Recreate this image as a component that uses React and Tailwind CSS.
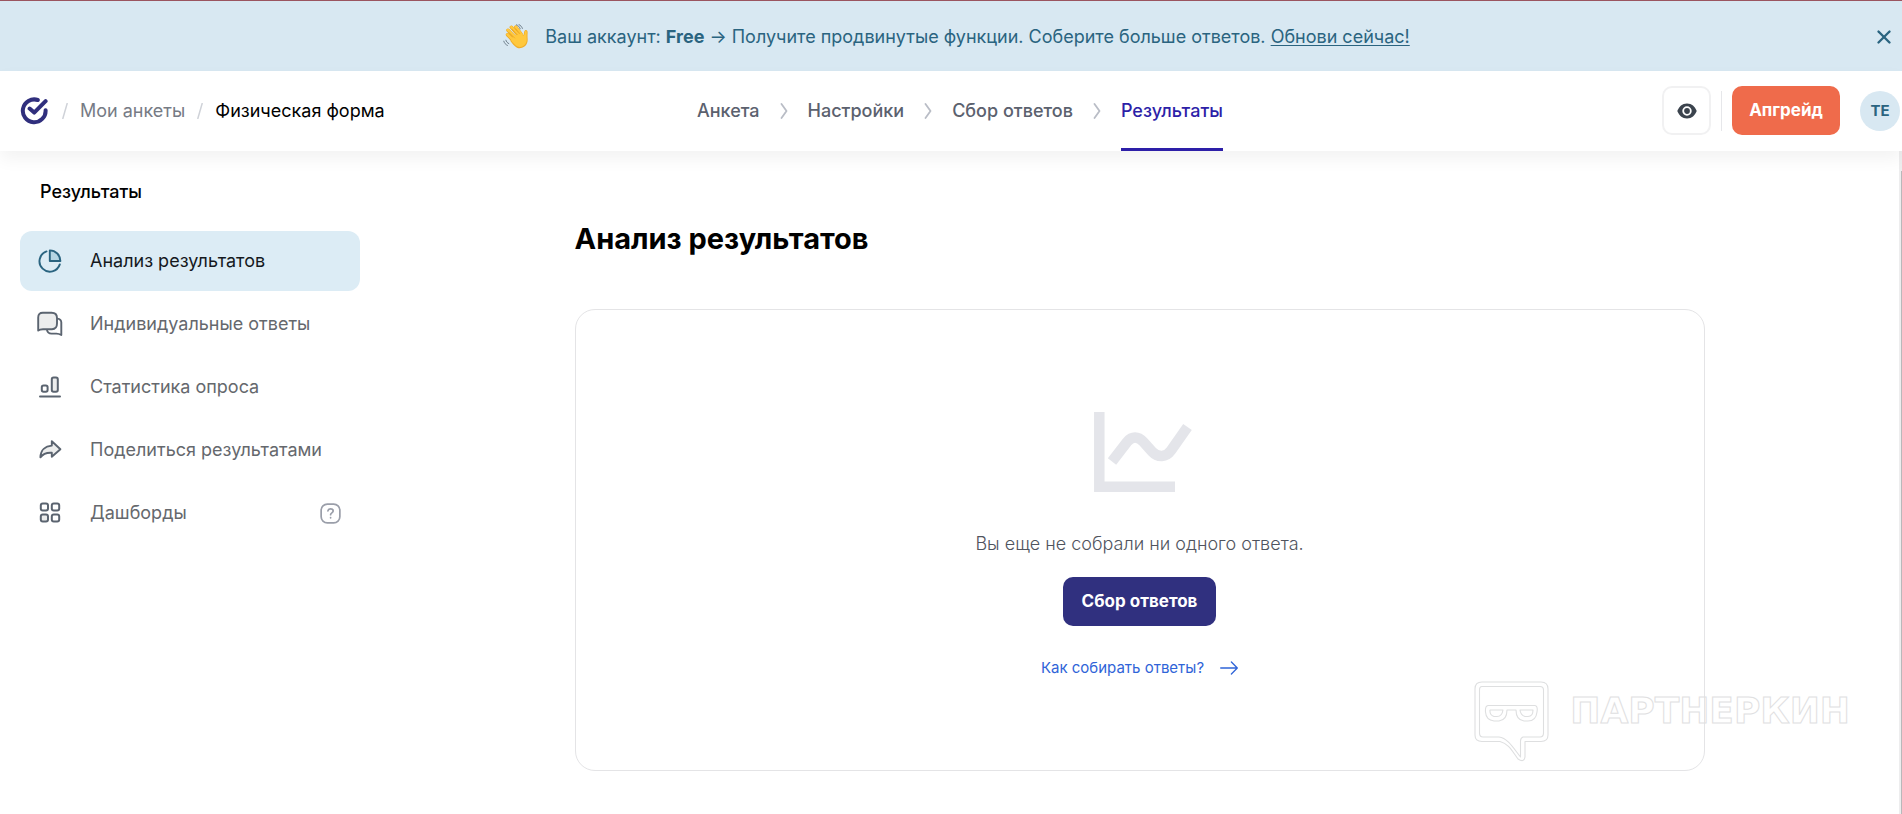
import { X } from 'lucide-react'

const PieIcon = () => (
  <svg width="26" height="26" viewBox="0 0 26 26" fill="none" stroke="#2a6480" strokeWidth="1.9" strokeLinecap="round" strokeLinejoin="round">
    <path d="M9.5 3.4A10.4 10.4 0 1 0 22.8 16.4" />
    <path d="M12.8 2.4A10.6 10.6 0 0 1 23.4 13H12.8Z" fill="#b5d5e3" />
  </svg>
)

const ChatIcon = () => (
  <svg width="26" height="26" viewBox="0 0 26 26" fill="none" stroke="#5b6470" strokeWidth="1.9" strokeLinecap="round" strokeLinejoin="round">
    <path d="M20.4 7.6C22.6 7.8 24.3 9.3 24.3 11.6V24C22.4 22.8 21.4 22.6 19.4 22.6H14.4C11.8 22.6 10.4 21.2 9.9 18.6" />
    <path d="M1.2 19.6V6.4C1.2 3.2 2.9 1.7 5.8 1.7H14.6C18 1.7 20 3.6 20 7V12.6C20 16.2 18.4 18.2 15 18.2H6C4 18.2 2.4 18.5 1.2 19.6Z" fill="#eceded" />
  </svg>
)

const StatsIcon = () => (
  <svg width="26" height="26" viewBox="0 0 26 26" fill="none" stroke="#5b6470" strokeWidth="2" strokeLinecap="round">
    <rect x="4.8" y="11.4" width="5.8" height="6.4" rx="1.8" />
    <rect x="14.8" y="3.6" width="6" height="14.2" rx="1.8" fill="#eceded" />
    <path d="M3 22.6H23" />
  </svg>
)

const ShareIcon = () => (
  <svg width="26" height="26" viewBox="0 0 26 26" fill="#eceded" stroke="#5b6470" strokeWidth="1.9" strokeLinecap="round" strokeLinejoin="round">
    <path d="M14.8 4.2V8.6C8.4 9.1 3.6 13 3.4 20.4C6.2 16.6 9.6 15.4 14.8 15.8V19.8L23.4 12.2Z" />
  </svg>
)

const GridIcon = () => (
  <svg width="26" height="26" viewBox="0 0 26 26" fill="none" stroke="#5b6470" strokeWidth="2">
    <rect x="3.8" y="3.4" width="7.2" height="7" rx="2" />
    <rect x="14.8" y="3.4" width="7.4" height="7" rx="2" />
    <rect x="3.8" y="14.6" width="7.2" height="7" rx="2" fill="#eceded" />
    <rect x="14.8" y="14.6" width="7.4" height="7" rx="2" />
  </svg>
)

const HelpIcon = () => (
  <svg width="21" height="21" viewBox="0 0 22 22" fill="none" stroke="#9a9ea9" strokeWidth="1.8" strokeLinecap="round" strokeLinejoin="round">
    <rect x="1.2" y="1.2" width="19.6" height="19.6" rx="6.5" />
    <path d="M8.3 8.3C8.6 6.8 9.7 6.1 11.1 6.1C12.7 6.1 13.8 7 13.8 8.4C13.8 10.4 11.1 10.3 11.1 12.3" />
    <path d="M11.1 15.3V15.5" />
  </svg>
)

const LogoIcon = () => (
  <svg width="28" height="28" viewBox="0 0 28 28" fill="none" stroke="#302f7d" strokeWidth="4" strokeLinecap="round" strokeLinejoin="round">
    <path d="M17.8 3A11.4 11.4 0 1 0 25.6 13.2" />
    <path d="M9.6 11.6L14.2 15.6L25.6 4.2" />
  </svg>
)

const WaveIcon = () => (
  <svg width="26" height="26" viewBox="0 0 26 26" fill="none" strokeLinecap="round" strokeLinejoin="round">
    <g stroke="#e9a321" strokeWidth="3.4">
      <path d="M4.5 10.8L10.5 17M5 6.3L13 14.5M8.3 3.2L15.5 11.5M12.8 3L18 10" />
    </g>
    <path d="M10 12L18.5 9.5C19.8 11.8 20.4 11.8 20.9 9.5C21.2 7 21.8 5.7 23.2 6.1C25.1 6.7 24.6 8.7 24.5 11C24.3 14.1 25.3 16.2 24 19.3C22.6 22.7 18.2 25.4 14 23.7C11.2 22.4 8.6 18.8 7.4 17.1Z" fill="#f0ad29" />
    <g stroke="#ffc83d" strokeWidth="2.5">
      <path d="M4.5 10.5L11 17M5 6L14 15M8.4 3L16.5 12M12.8 2.7L18.5 10.5" />
    </g>
    <path d="M10 12L18.3 9.5C20 12.6 21.3 12 21.7 9.3C22 7 22.4 6.6 23.2 6.9C24.2 7.4 23.6 9.4 23.6 11.2C23.5 14.4 24.3 16.1 23.1 18.7C21.6 21.9 18 23.8 14.5 22.5C12.4 21.5 9.5 18.5 8.3 16.8Z" fill="#ffc83d" />
    <path d="M6.2 8.6L11.6 14M9.4 5.4L14.4 10.8M13 5L16.8 9.6" stroke="#e9a321" strokeWidth=".7" />
    <path d="M13.4.8C15.2 1.4 16.5 2.9 17.2 4.8M16 .6C17.8 1.5 18.8 2.7 19.4 4.4M.8 17.2C1.3 19.1 2.6 20.6 4.4 21.4M2.9 16.2C3.3 17.7 4.3 18.9 5.8 19.6" stroke="#6f7f8c" strokeWidth="1" />
  </svg>
)

const EyeIcon = () => (
  <svg width="20" height="16" viewBox="0 0 20 16">
    <path d="M10 .5C5.2.5 2 3.6.3 8C2 12.4 5.2 15.5 10 15.5S18 12.4 19.7 8C18 3.6 14.8.5 10 .5Z" fill="#3b434d" />
    <circle cx="10" cy="8" r="3.8" fill="#3b434d" stroke="#fff" strokeWidth="1.8" />
  </svg>
)

const ChevronIcon = () => (
  <svg width="8" height="16" viewBox="0 0 8 16" fill="none" stroke="#b9bdc6" strokeWidth="1.8" strokeLinecap="round" strokeLinejoin="round">
    <path d="M1.5 1L6.5 8L1.5 15" />
  </svg>
)

const SlashIcon = () => (
  <svg width="6" height="16" viewBox="0 0 6 16" fill="none" stroke="#cfd2d8" strokeWidth="1.5">
    <path d="M5.3 0L.7 16" />
  </svg>
)

const ChartIcon = () => (
  <svg width="104" height="80" viewBox="-6 0 104 80" fill="none" stroke="#e4e5ea" strokeWidth="10.5">
    <path d="M5.3 0V74.8H81" />
    <path d="M18 49.5L33 30C38 24 44 24 49.5 30L58 39.5C64 46 72 45.5 77 38.5L93.5 15" />
  </svg>
)

const MaskLogo = () => (
  <svg width="76" height="82" viewBox="0 0 76 82" fill="none" stroke="#dedfe0" strokeWidth="1.1" strokeLinejoin="round">
    <path d="M8 1H67Q74 1 74 8V54Q74 60.5 67 60.5H51V76Q50 82 44 78C38 70 35 63 26 60.5H8Q1 60.5 1 54V8Q1 1 8 1Z" />
    <path d="M8 5.5H66Q69.5 5.5 69.5 9V52Q69.5 56 66 56H49Q46.5 57 46.5 60V76C40 68 34 57 25 56H9Q5.5 56 5.5 52V9Q5.5 5.5 8 5.5Z" />
    <path d="M14 24.5H61Q64 25 63 31Q62 40 54 40H50Q42 39 42 29H33Q33 39 25 40H20Q12 39 11.5 31Q11 25 14 24.5Z" />
    <path d="M16 29H29Q28 35.5 23 35.5H20Q15.5 34 16 29ZM46 29H59Q59 35.5 54 35.5H51Q46.5 34 46 29Z" />
  </svg>
)

const steps = ['Анкета', 'Настройки', 'Сбор ответов', 'Результаты']

const menu = [
  { label: 'Анализ результатов', Icon: PieIcon, active: true },
  { label: 'Индивидуальные ответы', Icon: ChatIcon },
  { label: 'Статистика опроса', Icon: StatsIcon },
  { label: 'Поделиться результатами', Icon: ShareIcon },
  { label: 'Дашборды', Icon: GridIcon, help: true },
]

const Banner = () => (
  <div className="flex items-center h-[71px] pt-0.5 pr-[7px] bg-[#d8e8f2] border-t border-[#9a5560] text-[#2a6480]">
    <div className="flex-1 flex items-center justify-center gap-4 pl-10 text-lg">
      <WaveIcon />
      <p>
        Ваш аккаунт: <b className="font-bold">Free</b> → Получите продвинутые функции. Соберите больше ответов.{' '}
        <a href="#upgrade" className="underline underline-offset-2">Обнови сейчас!</a>
      </p>
    </div>
    <button aria-label="Закрыть" className="flex">
      <X size={22} strokeWidth={2.6} />
    </button>
  </div>
)

const Header = () => (
  <header className="relative z-10 grid grid-cols-[1fr_auto_1fr] items-center h-20 pl-5 pr-[2px] bg-white text-lg shadow-[0_8px_16px_rgba(0,0,0,0.05)]">
    <div className="flex items-center gap-3">
      <a href="#home" aria-label="Главная" className="mr-0.5">
        <LogoIcon />
      </a>
      <SlashIcon />
      <a href="#forms" className="text-[#767b85]">Мои анкеты</a>
      <SlashIcon />
      <span className="text-black">Физическая форма</span>
    </div>

    <nav className="flex items-center self-stretch gap-5 font-medium text-[#5b616e]">
      {steps.map((step, i) => (
        <div key={step} className="flex items-center gap-5 self-stretch">
          {i > 0 && <ChevronIcon />}
          <a
            href="#step"
            className={
              i === 3
                ? 'flex items-center self-stretch pt-[3px] border-b-3 border-[#2d1fa8] text-[#2d1fa8]'
                : 'flex items-center self-stretch'
            }
          >
            {step}
          </a>
        </div>
      ))}
    </nav>

    <div className="flex items-center justify-end pb-px">
      <button aria-label="Просмотр" className="flex items-center justify-center size-[49px] rounded-[10px] border-2 border-[#f1f1f2]">
        <EyeIcon />
      </button>
      <div className="w-px h-10 mx-[10px] bg-[#e6e7ea]" />
      <button className="h-[49px] w-[108px] rounded-[10px] bg-[#ef6b4b] text-white text-[17px] font-bold">Апгрейд</button>
      <button className="size-10 ml-5 rounded-full bg-[#d8e8f2] text-[#2a6480] text-[15px] font-bold">TE</button>
    </div>
  </header>
)

const Sidebar = () => (
  <aside className="w-[380px] shrink-0 px-5 pt-[27px] text-lg">
    <h2 className="pl-5 font-medium text-black">Результаты</h2>
    <ul className="flex flex-col gap-[3px] mt-[25px]">
      {menu.map(({ label, Icon, active, help }) => (
        <li key={label}>
          <a
            href="#section"
            className={
              active
                ? 'flex items-center gap-[27px] h-[60px] w-[340px] px-[17px] rounded-xl bg-[#dcecf5] text-[#15191d]'
                : 'flex items-center gap-[27px] h-[60px] w-[340px] pl-[17px] pr-[19px] rounded-xl text-[#65686d]'
            }
          >
            <Icon />
            <span className="flex-1">{label}</span>
            {help && <HelpIcon />}
          </a>
        </li>
      ))}
    </ul>
  </aside>
)

const App = () => {
  return (
    <div className="relative flex flex-col min-h-screen bg-white font-['Inter',sans-serif]">
      <Banner />
      <Header />

      <div className="flex flex-1">
        <Sidebar />
        <main className="flex-1 pt-[70px] pb-10">
          <div className="max-w-[1130px] mx-auto">
            <h1 className="text-[29px] leading-9 font-bold text-black">Анализ результатов</h1>
            <section className="flex flex-col items-center mt-[52px] pt-[102px] pb-[90px] rounded-[20px] border border-[#e4e4e6]">
              <ChartIcon />
              <p className="mt-[38px] text-lg font-light text-[#50545e]">Вы еще не собрали ни одного ответа.</p>
              <button className="h-[49px] w-[153px] mt-[19px] rounded-[10px] bg-[#30307f] text-white text-[17px] font-bold">Сбор ответов</button>
              <a href="#help" className="flex items-center gap-4 mt-[30px] text-[15px] leading-6 text-[#2f64d8]">
                Как собирать ответы?
                <svg width="18" height="14" viewBox="0 0 18 14" fill="none" stroke="#2f64d8" strokeWidth="1.3" strokeLinecap="round" strokeLinejoin="round">
                  <path d="M.7 7H17.3M11.4 1L17.3 7L11.4 13" />
                </svg>
              </a>
            </section>
          </div>
        </main>
        {/* Scroll track with its thumb */}
        <div className="flex justify-end w-[3px] pt-5 bg-[#ededee]">
          <div className="w-px bg-[#b8b8ba]" />
        </div>
      </div>

      {/* Watermark over the card's lower right corner */}
      <div className="absolute z-20 right-[52px] bottom-[51px] flex items-start gap-5 pointer-events-none">
        <MaskLogo />
        <span className="mt-[10px] text-4xl leading-10 font-bold font-['DejaVu_Sans',sans-serif] text-transparent [-webkit-text-stroke:1px_#e0e0e1]">ПАРТНЕРКИН</span>
      </div>
    </div>
  )
}

export default App
